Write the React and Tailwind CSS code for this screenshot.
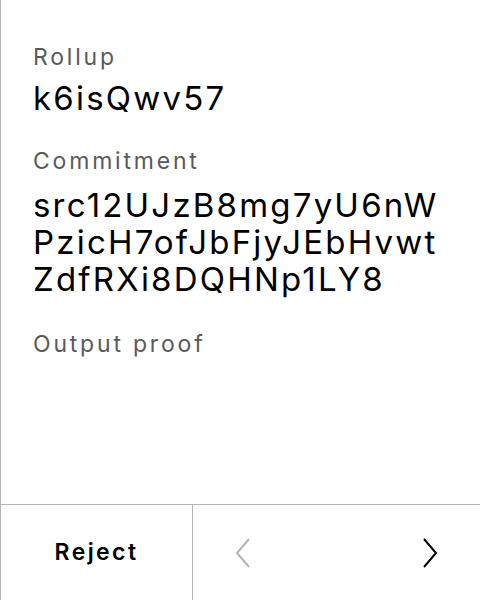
import React from "react";

const Field = ({ label, value, className = "", valueGap = "mt-[9px]" }) => (
  <div className={className}>
    <div className="text-[23px] leading-[30px] tracking-[2.8px] text-[#5a5a5a]">{label}</div>
    {value && (
      <div className={`${valueGap} text-[33px] leading-[37px] tracking-[2.2px] text-black break-all`}>{value}</div>
    )}
  </div>
);

const App = () => {
  return (
    <div
      className="h-[600px] w-[480px] flex flex-col bg-white border-l border-[#b3b3b3]"
      style={{ fontFamily: "Inter, 'Noto Sans', sans-serif" }}
    >
      <div className="flex-1 px-[32px] pt-[42px]">
        <Field label="Rollup" value="k6isQwv57" valueGap="mt-[8px]" />
        <Field
          className="mt-[29px]"
          valueGap="mt-[11px]"
          label="Commitment"
          value={
            <>
              <div>src12UJzB8mg7yU6nW</div>
              <div>PzicH7ofJbFjyJEbHvwt</div>
              <div>ZdfRXi8DQHNp1LY8</div>
            </>
          }
        />
        <Field className="mt-[31px]" label="Output proof" />
      </div>

      {/* bottom action bar */}
      <div className="h-[96px] flex border-t border-[#b3b3b3]">
        <button className="w-[192px] flex items-center justify-center text-[23px] font-semibold tracking-[2.4px] text-black border-r border-[#b3b3b3]">
          Reject
        </button>
        <div className="flex-1 flex items-center justify-between px-[42px]">
          <svg width="16" height="32" viewBox="0 0 16 32" fill="none" stroke="#b3b3b3" strokeWidth="2">
            <path d="M14 2 L2 16 L14 30" />
          </svg>
          <svg width="16" height="32" viewBox="0 0 16 32" fill="none" stroke="#000" strokeWidth="2">
            <path d="M2 2 L14 16 L2 30" />
          </svg>
        </div>
      </div>
    </div>
  );
};

export default App;
